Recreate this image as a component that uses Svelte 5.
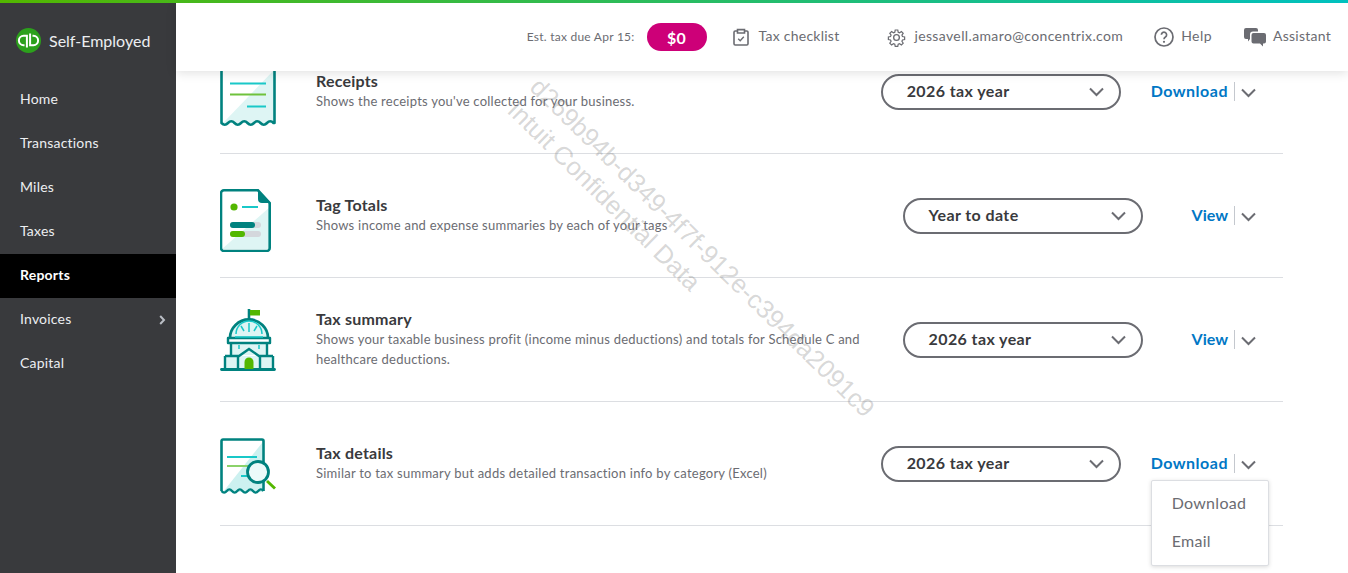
<script>
	const nav = [
		{ label: 'Home' },
		{ label: 'Transactions' },
		{ label: 'Miles' },
		{ label: 'Taxes' },
		{ label: 'Reports', active: true },
		{ label: 'Invoices', more: true },
		{ label: 'Capital' }
	];

	const reports = [
		{
			icon: 'receipt',
			title: 'Receipts',
			desc: "Shows the receipts you've collected for your business.",
			period: '2026 tax year',
			action: 'Download'
		},
		{
			icon: 'tag',
			title: 'Tag Totals',
			desc: 'Shows income and expense summaries by each of your tags',
			period: 'Year to date',
			action: 'View'
		},
		{
			icon: 'capitol',
			title: 'Tax summary',
			desc: 'Shows your taxable business profit (income minus deductions) and totals for Schedule C and healthcare deductions.',
			period: '2026 tax year',
			action: 'View'
		},
		{
			icon: 'details',
			title: 'Tax details',
			desc: 'Similar to tax summary but adds detailed transaction info by category (Excel)',
			period: '2026 tax year',
			action: 'Download',
			open: true
		}
	];
</script>

{#snippet chevron()}
	<svg class="chev" width="15" height="10" viewBox="0 0 15 10" fill="none">
		<path d="M1 1.500 7.500 8 14 1.500" stroke="#6b6c72" stroke-width="2" />
	</svg>
{/snippet}

<div class="app">
	<div class="topline"></div>
	<div class="frame">
		<aside class="sidebar">
			<div class="brand">
				<svg width="25" height="25" viewBox="0 0 25 25">
					<circle cx="12.500" cy="12.500" r="12.500" fill="#2ca01c" />
					<path
						d="M8.500 17.200h-.9a4.700 4.700 0 0 1 0-9.400h3.300V19.500M16.500 7.800h.9a4.700 4.700 0 0 1 0 9.400h-3.300V5.500"
						fill="none"
						stroke="#fff"
						stroke-width="2"
					/>
				</svg>
				<span>Self-Employed</span>
			</div>
			<nav>
				{#each nav as item}
					<div class="nav-item" class:active={item.active}>
						<span class="nav-label">{item.label}</span>
						{#if item.more}
							<svg width="7" height="10" viewBox="0 0 7 10" fill="none">
								<path d="M1.200 1 5 5 1.200 9" stroke="#babec5" stroke-width="2" />
							</svg>
						{/if}
					</div>
				{/each}
			</nav>
		</aside>

		<main class="main">
			<header class="header">
				<span class="est">Est. tax due Apr 15:</span>
				<span class="pill">$0</span>
				<span class="tool check">
					<svg width="16" height="18" viewBox="0 0 16 18" fill="none" stroke="#6b6c72" stroke-width="1.600">
						<path d="M4.500 3H2.200A1.200 1.200 0 0 0 1 4.200v11.600A1.200 1.200 0 0 0 2.200 17h11.600a1.200 1.200 0 0 0 1.200-1.200V4.200A1.200 1.200 0 0 0 13.800 3h-2.300" />
						<path d="M4.500 1.600h7V5h-7z" />
						<path d="m5.200 10.800 2 2 3.600-4" stroke-width="1.400" />
					</svg>
					<span class="label">Tax checklist</span>
				</span>
				<span class="tool user">
					<svg width="19" height="19" viewBox="0 0 24 24" fill="none" stroke="#6b6c72" stroke-width="1.700">
						<circle cx="12" cy="12" r="3.600" />
						<path d="M10.200 1.500h3.600l.6 3.100 1.900.8 2.600-1.800 2.500 2.500-1.800 2.600.8 1.900 3 .6v3.600l-3 .6-.8 1.900 1.800 2.600-2.500 2.500-2.600-1.800-1.900.8-.6 3.100h-3.600l-.6-3.100-1.900-.8-2.600 1.800-2.500-2.500 1.800-2.600-.8-1.900-3-.6v-3.600l3-.6.8-1.900-1.800-2.600 2.500-2.500 2.600 1.800 1.900-.8z" transform="translate(1.200 1.200) scale(.9)" />
					</svg>
					<span class="label">jessavell.amaro@concentrix.com</span>
				</span>
				<span class="tool help">
					<svg width="20" height="20" viewBox="0 0 20 20" fill="none" stroke="#6b6c72">
						<circle cx="10" cy="10" r="9" stroke-width="1.700" />
						<path d="M7.400 7.800A2.600 2.600 0 1 1 11.400 10c-1 .6-1.400 1.100-1.400 2.200" stroke-width="1.700" />
						<circle cx="10" cy="14.800" r="1.100" fill="#6b6c72" stroke="none" />
					</svg>
					<span class="label">Help</span>
				</span>
				<span class="tool assistant">
					<svg width="22" height="19" viewBox="0 0 22 19" fill="#6b6c72">
						<path d="M2 0h10a2 2 0 0 1 2 2v1.500H9a3 3 0 0 0-3 3V11l-2 2.400V11H2a2 2 0 0 1-2-2V2a2 2 0 0 1 2-2z" />
						<path d="M9.500 5h10.500a2 2 0 0 1 2 2v6.500a2 2 0 0 1-2 2h-1v3l-3-3H9.500a2 2 0 0 1-2-2V7a2 2 0 0 1 2-2z" />
					</svg>
					<span class="label">Assistant</span>
				</span>
			</header>

			<section class="list">
				{#each reports as r}
					<article class="row">
						<div class="icon {r.icon}">
							{#if r.icon === 'receipt'}
								<svg width="56" height="68" viewBox="0 0 56 68" fill="none">
									<path d="M3 63 54 10v53z" fill="#def5f4" />
									<path
										d="M1.500 0V63q3.250 3.500 6.500 0t6.500 0t6.500 0t6.500 0t6.500 0t6.500 0t6.500 0t6.500 0l1 0V0"
										stroke="#00827f"
										stroke-width="2.600"
										stroke-linejoin="round"
									/>
									<path d="M10 23.500h36" stroke="#19c8c8" stroke-width="2" />
									<path d="M10 34.500h36" stroke="#6fc23c" stroke-width="2" />
									<path d="M27 46.500h19" stroke="#19c8c8" stroke-width="2" />
								</svg>
							{:else if r.icon === 'tag'}
								<svg width="51" height="63" viewBox="0 0 51 63" fill="none">
									<path d="M2 60 50 18v42z" fill="#def5f4" />
									<path d="M4 1.300h34L49.700 14v45a3 3 0 0 1-3 3H4a3 3 0 0 1-3-3V4.300a3 3 0 0 1 3-3z" stroke="#00827f" stroke-width="2.600" />
									<path d="M38 1.300V10a4 4 0 0 0 4 4h8z" fill="#00827f" />
									<circle cx="14" cy="18" r="3.600" fill="#53b700" />
									<path d="M22 18h16" stroke="#19c8c8" stroke-width="2" />
									<rect x="10" y="33" width="31" height="6" rx="3" fill="#d4d7dc" />
									<rect x="10" y="33" width="25" height="6" rx="3" fill="#00827f" />
									<rect x="10" y="42" width="31" height="6" rx="3" fill="#d4d7dc" />
									<rect x="10" y="42" width="15" height="6" rx="3" fill="#53b700" />
								</svg>
							{:else if r.icon === 'capitol'}
								<svg width="56" height="62" viewBox="0 0 56 62" fill="none">
									<path d="M10 28a19 18 0 0 1 38 0z" fill="#def5f4" />
									<path d="M11 35h36v11H11zM6 47h46v12H6z" fill="#def5f4" />
									<path d="M29 0v11" stroke="#00827f" stroke-width="2.600" />
									<path d="M30 1h10v5.500H30z" fill="#53b700" />
									<path d="M10 29a19 18.500 0 0 1 38 0" stroke="#00827f" stroke-width="2.800" />
									<path d="M8 29h42v5H8z" stroke="#00827f" stroke-width="2.400" stroke-linejoin="round" />
									<path d="M11 34v12M47 34v12" stroke="#00827f" stroke-width="2.400" />
									<path d="M5 47h14l10-7 10 7h14" stroke="#00827f" stroke-width="2.400" />
									<path d="M5 47v13M18 47v13M40 47v13M53 47v13" stroke="#00827f" stroke-width="2.400" />
									<path d="M1.500 60.500h53" stroke="#00827f" stroke-width="2.800" stroke-linecap="round" />
									<path d="M24.500 60v-7a4.500 4.500 0 0 1 9 0v7z" fill="#53b700" />
									<path d="M16 25a13 13 0 0 1 26 0M29 14v9M21 17l3 5M37 17l-3 5M15 28h28M19 36v4M39 36v4" stroke="#19c8c8" stroke-width="1.500" />
								</svg>
							{:else}
								<svg width="56" height="58" viewBox="0 0 56 58" fill="none">
									<path d="M3 54 42 5v49z" fill="#cdf1f0" />
									<path
										d="M1.500 53V3a1.500 1.500 0 0 1 1.500-1.500h39a1.500 1.500 0 0 1 1.500 1.500V53"
										stroke="#00827f"
										stroke-width="2.600"
									/>
									<path
										d="M1.500 53q2.630 3.200 5.250 0t5.250 0t5.250 0t5.250 0t5.250 0t5.250 0t5.250 0t5.250 0"
										stroke="#00827f"
										stroke-width="2.400"
									/>
									<path d="M7 19h30" stroke="#19c8c8" stroke-width="2" />
									<path d="M7 28h21" stroke="#8bd26a" stroke-width="2" />
									<path d="M21 38h10" stroke="#19c8c8" stroke-width="2" />
									<circle cx="38" cy="34" r="10.500" fill="#ecfafa" stroke="#00827f" stroke-width="2.800" />
									<path d="m47 43 8 7.500" stroke="#53b700" stroke-width="3" />
								</svg>
							{/if}
						</div>

						<div class="text">
							<h3>{r.title}</h3>
							<p>{r.desc}</p>
						</div>

						<div class="period">
							<span>{r.period}</span>
							{@render chevron()}
						</div>

						<div class="action" class:view={r.action === 'View'}>
							<span class="link">{r.action}</span>
							<span class="sep"></span>
							{@render chevron()}
							{#if r.open}
								<div class="menu">
									<div>Download</div>
									<div>Email</div>
								</div>
							{/if}
						</div>
					</article>
				{/each}
			</section>
		</main>
	</div>

	<div class="watermark">
		<div>d269b94b-d349-4f7f-912e-c394da2091c9</div>
		<div>Intuit Confidential Data</div>
	</div>
</div>

<style>
	:global(body) {
		margin: 0;
		background: #fff;
		overflow: hidden;
	}

	.app {
		position: relative;
		width: 1348px;
		height: 573px;
		overflow: hidden;
		font-family: Lato, 'Open Sans', sans-serif;
		color: #393a3d;
	}

	.topline {
		position: relative;
		z-index: 3;
		height: 3px;
		background: linear-gradient(90deg, #53b700, #00c1bf);
	}

	.frame {
		display: flex;
		height: 570px;
	}

	.sidebar {
		flex: none;
		width: 176px;
		background: #393a3d;
		color: #fff;
	}

	.brand {
		display: flex;
		align-items: center;
		gap: 8px;
		height: 75px;
		padding-left: 16px;
		font-size: 16px;
		color: #eceef1;
	}

	.nav-item {
		display: flex;
		align-items: center;
		justify-content: space-between;
		height: 44px;
		padding: 0 10px 0 20px;
		font-size: 14px;
		letter-spacing: 0.2px;
		color: #eceef1;
	}

	.nav-label {
		padding-bottom: 4px;
	}

	.nav-item.active {
		background: #000;
		color: #fff;
		font-weight: 700;
	}

	.main {
		flex: 1;
		min-width: 0;
	}

	.header {
		position: relative;
		z-index: 2;
		display: flex;
		align-items: center;
		height: 68px;
		padding-right: 17px;
		justify-content: flex-end;
		background: #fff;
		box-shadow: 0 2px 10px rgba(0, 0, 0, 0.12);
		font-size: 14px;
		letter-spacing: 0.25px;
		color: #6b6c72;
	}

	.est {
		padding-bottom: 2px;
		font-size: 12px;
	}

	.pill {
		display: flex;
		align-items: center;
		justify-content: center;
		width: 60px;
		height: 28px;
		margin-left: 12px;
		border-radius: 14px;
		background: #cd0078;
		color: #fff;
		font-size: 16px;
		font-weight: 700;
	}

	.tool {
		display: flex;
		align-items: center;
	}

	.label {
		padding-bottom: 4px;
	}

	.check {
		margin-left: 26px;
		gap: 10px;
	}

	.user {
		margin-left: 48px;
		gap: 8px;
		letter-spacing: 0.37px;
	}

	.help {
		margin-left: 31px;
		gap: 7px;
		letter-spacing: 0.45px;
	}

	.assistant {
		margin-left: 32px;
		gap: 7px;
	}

	.list {
		margin: -41px 65px 0 44px;
	}

	.row {
		display: flex;
		align-items: center;
		height: 123px;
		border-bottom: 1px solid #dcdee2;
	}

	.icon {
		flex: none;
		display: flex;
		width: 96px;
	}

	.icon.receipt {
		margin-top: 4px;
	}

	.icon.tag {
		margin-top: 10px;
	}

	.icon.details {
		margin-top: 6px;
	}

	.text {
		flex: 1;
		min-width: 0;
	}

	h3 {
		margin: 0;
		font-size: 16px;
		line-height: 18px;
		font-weight: 700;
		letter-spacing: 0.2px;
		color: #393a3d;
	}

	p {
		max-width: 560px;
		margin: 1px 0 0;
		font-size: 13px;
		line-height: 20px;
		letter-spacing: 0.24px;
		color: #6b6c72;
	}

	.period {
		flex: none;
		box-sizing: border-box;
		display: flex;
		align-items: center;
		justify-content: space-between;
		width: 240px;
		height: 36px;
		padding: 0 15px 0 24px;
		border: 2px solid #6b6c72;
		border-radius: 18px;
		font-size: 16px;
		font-weight: 700;
		letter-spacing: 0.4px;
	}

	.period span,
	.link {
		padding-bottom: 2px;
	}

	.action {
		position: relative;
		flex: none;
		display: flex;
		align-items: center;
		margin: 0 27px 0 30px;
	}

	.action.view {
		margin-left: 49px;
	}

	.action .chev {
		margin-top: 3px;
	}

	.link {
		font-size: 16px;
		font-weight: 700;
		letter-spacing: 0.5px;
		color: #0077c5;
	}

	.action.view .link {
		letter-spacing: 0;
	}

	.sep {
		width: 1px;
		height: 19px;
		margin: 0 6px;
		background: #c4c8ce;
	}

	.chev {
		display: block;
	}

	.menu {
		position: absolute;
		z-index: 1;
		top: 27px;
		left: 0;
		width: 116px;
		padding: 4px 0;
		background: #fff;
		border: 1px solid #dcdee2;
		border-radius: 2px;
		box-shadow: 0 1px 4px rgba(0, 0, 0, 0.15);
		font-size: 16px;
		color: #6b6c72;
	}

	.menu div {
		height: 38px;
		padding-left: 20px;
		line-height: 36px;
		letter-spacing: 0.3px;
	}

	.watermark {
		position: absolute;
		z-index: 4;
		top: 71px;
		left: 546px;
		transform: rotate(44.500deg);
		transform-origin: 0 0;
		font-family: 'Liberation Sans', sans-serif;
		font-size: 25.500px;
		line-height: 32px;
		white-space: nowrap;
		color: rgba(120, 120, 120, 0.3);
		pointer-events: none;
	}
</style>
